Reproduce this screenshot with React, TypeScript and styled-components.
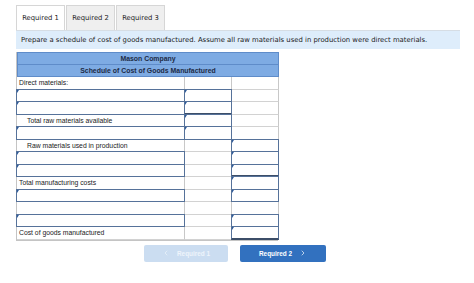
import React from 'react'
import styled, { createGlobalStyle, css } from 'styled-components'
import { ChevronLeft, ChevronRight } from 'lucide-react'

type CellKind = 'label' | 'indent' | 'input' | 'blank'

interface CellDef {
    kind: CellKind
    text?: string
    total?: boolean
}

const lbl = (text: string): CellDef => ({ kind: 'label', text })
const ind = (text: string): CellDef => ({ kind: 'indent', text })
const inp = (total = false): CellDef => ({ kind: 'input', total })
const blk: CellDef = { kind: 'blank' }

const rows: CellDef[][] = [
    [lbl('Direct materials:'), blk, blk],
    [inp(), inp(), blk],
    [inp(), inp(true), blk],
    [ind('Total raw materials available'), inp(), blk],
    [inp(), inp(), blk],
    [ind('Raw materials used in production'), blk, inp()],
    [inp(), blk, inp()],
    [inp(), blk, inp(true)],
    [lbl('Total manufacturing costs'), blk, inp()],
    [inp(), blk, inp()],
    [blk, blk, blk],
    [inp(), blk, inp()],
    [lbl('Cost of goods manufactured'), blk, inp(true)]
]

const tabs = ['Required 1', 'Required 2', 'Required 3']

const App = () => {
    return (
        <>
            <GlobalStyle />
            <Page_>
                <Tabs_>
                    {tabs.map((t, i) => (
                        <Tab_ key={t} $active={i === 0}>
                            {t}
                        </Tab_>
                    ))}
                </Tabs_>
                <Prompt_>
                    Prepare a schedule of cost of goods manufactured. Assume all raw materials used in
                    production were direct materials.
                </Prompt_>
                <Sheet_>
                    <HeadRow_>Mason Company</HeadRow_>
                    <HeadRow_>Schedule of Cost of Goods Manufactured</HeadRow_>
                    {rows.map((row, r) =>
                        row.map((cell, c) => (
                            <Cell_ key={`${r}-${c}`} $kind={cell.kind} $total={cell.total}>
                                {cell.text}
                            </Cell_>
                        ))
                    )}
                </Sheet_>
                <Nav_>
                    <NavButton_ disabled>
                        <ChevronLeft size={8} strokeWidth={2} />
                        <span>Required 1</span>
                    </NavButton_>
                    <NavButton_>
                        <span>Required 2</span>
                        <ChevronRight size={8} strokeWidth={2} />
                    </NavButton_>
                </Nav_>
            </Page_>
        </>
    )
}

const GlobalStyle = createGlobalStyle`
    html, body {
        margin: 0;
        padding: 0;
        background: #ffffff;
    }
    * {
        box-sizing: border-box;
    }
`

const Page_ = styled.div`
    width: 474px;
    height: 283px;
    padding: 5px 16px 0 16px;
    font-family: 'DejaVu Sans', Verdana, sans-serif;
`

const Tabs_ = styled.div`
    display: flex;
    height: 25px;
`

const Tab_ = styled.div<{ $active: boolean }>`
    width: 49px;
    display: grid;
    place-items: center;
    font-size: 6.8px;
    color: #222;
    border: 1px solid #d6d6d6;
    border-bottom: none;
    margin-right: 1px;
    background: ${({ $active }) => ($active ? '#ffffff' : '#efefef')};
`

const Prompt_ = styled.div`
    width: 444px;
    height: 19px;
    background: #deedfb;
    border-top: 1px solid #d6dde4;
    display: flex;
    align-items: center;
    padding-left: 5px;
    font-size: 6.85px;
    color: #1c1c1c;
    white-space: nowrap;
    margin-bottom: 3px;
`

const Sheet_ = styled.div`
    width: 262px;
    display: grid;
    grid-template-columns: 168px 47px 47px;
    grid-auto-rows: 12.5px;
    font-family: 'Liberation Sans', Arial, sans-serif;
    border-left: 1px solid #c4c4c4;
    border-bottom: 1px solid #c4c4c4;
`

const HeadRow_ = styled.div`
    grid-column: 1 / -1;
    background: #7eabe3;
    border: 1px solid #5f8cc9;
    border-top-width: 0;
    &:first-child {
        border-top-width: 1px;
    }
    color: #1d2a45;
    font-weight: bold;
    font-size: 6.9px;
    display: grid;
    place-items: center;
`

const Cell_ = styled.div<{ $kind: CellKind; $total?: boolean }>`
    position: relative;
    border-right: 1px solid #c8c8c8;
    border-bottom: 1px solid #d2d2d2;
    font-size: 6.8px;
    color: #222;
    display: flex;
    align-items: center;
    white-space: nowrap;
    padding-left: ${({ $kind }) => ($kind === 'indent' ? '10px' : '2px')};
    ${({ $kind, $total }) =>
        $kind === 'input' &&
        css`
            &::after {
                content: '';
                position: absolute;
                z-index: 1;
                top: -1px;
                left: -1px;
                right: -1px;
                bottom: -1px;
                border: 1px solid #56729a;
                border-bottom: ${$total ? '2px solid #3c4e68' : '1px solid #56729a'};
            }
            &::before {
                content: '';
                position: absolute;
                z-index: 2;
                top: 0;
                left: 0;
                border-top: 3px solid #2f5c9a;
                border-right: 2px solid transparent;
            }
        `}
`

const Nav_ = styled.div`
    width: 438px;
    display: flex;
    justify-content: center;
    gap: 12px;
    margin-top: 4px;
`

const NavButton_ = styled.button`
    width: 86px;
    height: 17px;
    border: none;
    border-radius: 2px;
    display: flex;
    align-items: center;
    justify-content: center;
    gap: 7px;
    font-family: 'Liberation Sans', Arial, sans-serif;
    font-weight: bold;
    font-size: 6.4px;
    color: #ffffff;
    background: #3271bf;
    &:disabled {
        width: 84px;
        background: #cbddf1;
        color: #eef4fb;
    }
`

export default App
